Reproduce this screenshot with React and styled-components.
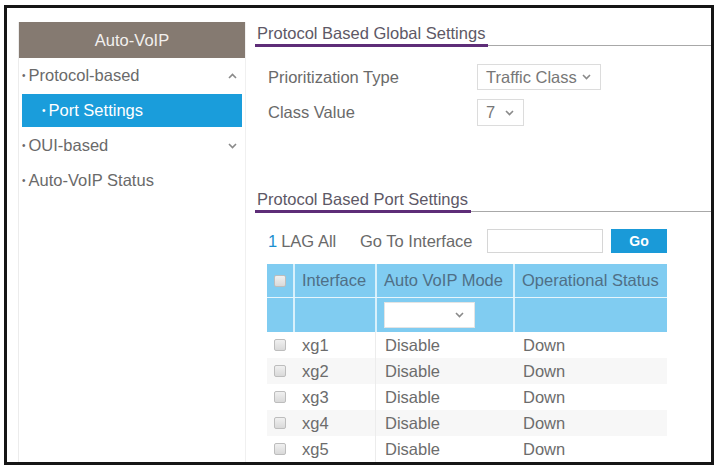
import React from "react";
import styled, { createGlobalStyle } from "styled-components";

const Global = createGlobalStyle`
  html, body { margin: 0; padding: 0; background: #fff; }
  body { font-family: "Liberation Sans", Arial, sans-serif; }
  * { box-sizing: border-box; }
`;

const FS = "16.5px";

const Frame = styled.div`
  margin: 5px 0 0 4px;
  width: 710px;
  height: 460px;
  border: 3px solid #151515;
  background: #fff;
  display: flex;
  overflow: hidden;
  padding: 14px 0 0 11px;
`;

const Sidebar = styled.nav`
  width: 228px;
  flex: none;
  border-left: 1px solid #ececec;
  border-right: 1px solid #f0f0f0;
  display: flex;
  flex-direction: column;
`;

const SideHeader = styled.div`
  height: 36px;
  background: #857a71;
  color: #f2f0ee;
  font-size: ${FS};
  display: flex;
  align-items: center;
  justify-content: center;
`;

const SideItem = styled.div`
  height: 35px;
  display: flex;
  align-items: center;
  padding: ${(p) => (p.$sub ? "1px 3px" : "0")};
`;

const SideLink = styled.div`
  flex: 1;
  height: ${(p) => (p.$active ? "33px" : "auto")};
  display: flex;
  align-items: center;
  justify-content: space-between;
  padding: 0 8px 0 ${(p) => (p.$sub ? "20px" : "3px")};
  background: ${(p) => (p.$active ? "#1a9ddb" : "transparent")};
  color: ${(p) => (p.$active ? "#fff" : "#6a6a6a")};
  font-size: ${FS};
`;

const Bullet = styled.span`
  margin-right: 3px;
  font-size: 10px;
  position: relative;
  top: -2px;
`;

const Main = styled.main`
  flex: 1;
  min-width: 0;
  padding: 1px 0 0 9px;
  display: flex;
  flex-direction: column;
`;

const TitleBar = styled.div`
  border-bottom: 1px solid #a8a8a8;
  margin-right: -20px;
  margin-top: ${(p) => p.$top || 0}px;
`;

const Title = styled.span`
  display: inline-block;
  padding: 0 3px 1px 2px;
  font-size: ${FS};
  line-height: 20px;
  color: #5d5866;
  border-bottom: 3px solid #5e2d78;
  margin-bottom: -2px;
`;

const Form = styled.div`
  display: flex;
  flex-direction: column;
  gap: 9px;
  padding: 18px 0 0 13px;
`;

const FormRow = styled.div`
  display: flex;
  align-items: center;
`;

const Label = styled.span`
  width: 209px;
  font-size: ${FS};
  color: #6a6a6a;
`;

const Select = styled.div`
  width: ${(p) => p.$w}px;
  height: ${(p) => p.$h || 26}px;
  border: 1px solid #dcdcdc;
  background: #fff;
  display: flex;
  align-items: center;
  justify-content: space-between;
  padding: 0 9px 0 8px;
  font-size: ${FS};
  color: #777;
`;

const Toolbar = styled.div`
  display: flex;
  align-items: center;
  padding: 17px 0 0 13px;
  font-size: ${FS};
  color: #6a6a6a;
  height: 41px;
`;

const LagGroup = styled.span`
  width: 92px;
  flex: none;
  white-space: nowrap;
`;

const Link = styled.span`
  color: #1a8fd0;
  margin-right: 4px;
`;

const GoLabel = styled.span`
  width: 127px;
  flex: none;
  white-space: nowrap;
`;

const TextInput = styled.div`
  width: 116px;
  height: 24px;
  border: 1px solid #d6d6d6;
  background: #fff;
`;

const GoButton = styled.div`
  width: 56px;
  height: 24px;
  margin-left: 8px;
  background: #1a9ad8;
  color: #fff;
  font-weight: bold;
  font-size: 14px;
  display: flex;
  align-items: center;
  justify-content: center;
`;

const Table = styled.div`
  margin: 11px 0 0 12px;
  width: 400px;
  display: flex;
  flex-direction: column;
`;

const cols = "26px 82px 138px 154px";

const HeadRow = styled.div`
  display: grid;
  grid-template-columns: ${cols};
  height: 34px;
  background: #80ccf1;
  border-bottom: ${(p) => (p.$first ? "1px solid #e6f5fc" : "none")};
`;

const HeadCell = styled.div`
  display: flex;
  align-items: center;
  justify-content: ${(p) => (p.$center ? "center" : "flex-start")};
  padding-left: ${(p) => (p.$center ? 0 : 7)}px;
  font-size: ${FS};
  color: #4f6f86;
  border-left: ${(p) => (p.$first ? "none" : "2px solid #d8f0fb")};
  white-space: nowrap;
`;

const FilterSelect = styled.div`
  width: 91px;
  height: 26px;
  background: #fff;
  border: 1px solid #e4e4e4;
  display: flex;
  align-items: center;
  justify-content: flex-end;
  padding-right: 10px;
`;

const DataRow = styled.div`
  display: grid;
  grid-template-columns: ${cols};
  height: 26px;
  background: ${(p) => (p.$alt ? "#f7f7f7" : "#fff")};
`;

const Cell = styled.div`
  display: flex;
  align-items: center;
  justify-content: ${(p) => (p.$center ? "center" : "flex-start")};
  padding-left: ${(p) => p.$pl ?? 9}px;
  font-size: ${FS};
  color: #6c6c6c;
  border-left: ${(p) => (p.$line ? "1px solid #ececec" : "none")};
`;

const Check = styled.span`
  width: 12px;
  height: 12px;
  border: 1px solid #bdbdbd;
  border-radius: 2px;
  background: linear-gradient(#f0f0f0, #d9d9d9);
  display: inline-block;
`;

const Chevron = ({ up, color = "#8a8a8a" }) => (
  <svg width="9" height="6" viewBox="0 0 9 6">
    <polyline
      points={up ? "1,5 4.5,1.5 8,5" : "1,1 4.5,4.5 8,1"}
      fill="none"
      stroke={color}
      strokeWidth="1.6"
    />
  </svg>
);

const rows = ["xg1", "xg2", "xg3", "xg4", "xg5"];

export default function App() {
  return (
    <>
      <Global />
      <Frame>
        <Sidebar>
          <SideHeader>Auto-VoIP</SideHeader>
          <SideItem>
            <SideLink>
              <span>
                <Bullet>•</Bullet>Protocol-based
              </span>
              <Chevron up />
            </SideLink>
          </SideItem>
          <SideItem $sub>
            <SideLink $sub $active>
              <span>
                <Bullet>•</Bullet>Port Settings
              </span>
            </SideLink>
          </SideItem>
          <SideItem>
            <SideLink>
              <span>
                <Bullet>•</Bullet>OUI-based
              </span>
              <Chevron />
            </SideLink>
          </SideItem>
          <SideItem>
            <SideLink>
              <span>
                <Bullet>•</Bullet>Auto-VoIP Status
              </span>
            </SideLink>
          </SideItem>
        </Sidebar>
        <Main>
          <TitleBar>
            <Title>Protocol Based Global Settings</Title>
          </TitleBar>
          <Form>
            <FormRow>
              <Label>Prioritization Type</Label>
              <Select $w={124}>
                <span>Traffic Class</span>
                <Chevron />
              </Select>
            </FormRow>
            <FormRow>
              <Label>Class Value</Label>
              <Select $w={47} $h={27}>
                <span>7</span>
                <Chevron />
              </Select>
            </FormRow>
          </Form>
          <TitleBar $top={63}>
            <Title>Protocol Based Port Settings</Title>
          </TitleBar>
          <Toolbar>
            <LagGroup>
              <Link>1</Link>LAG All
            </LagGroup>
            <GoLabel>Go To Interface</GoLabel>
            <TextInput />
            <GoButton>Go</GoButton>
          </Toolbar>
          <Table>
            <HeadRow $first>
              <HeadCell $first $center>
                <Check />
              </HeadCell>
              <HeadCell>Interface</HeadCell>
              <HeadCell>Auto VoIP Mode</HeadCell>
              <HeadCell>Operational Status</HeadCell>
            </HeadRow>
            <HeadRow>
              <HeadCell $first />
              <HeadCell />
              <HeadCell>
                <FilterSelect>
                  <Chevron />
                </FilterSelect>
              </HeadCell>
              <HeadCell />
            </HeadRow>
            {rows.map((r, i) => (
              <DataRow key={r} $alt={i % 2 === 1}>
                <Cell $center $pl={0}>
                  <Check />
                </Cell>
                <Cell>{r}</Cell>
                <Cell $line>Disable</Cell>
                <Cell $pl={10}>Down</Cell>
              </DataRow>
            ))}
          </Table>
        </Main>
      </Frame>
    </>
  );
}
